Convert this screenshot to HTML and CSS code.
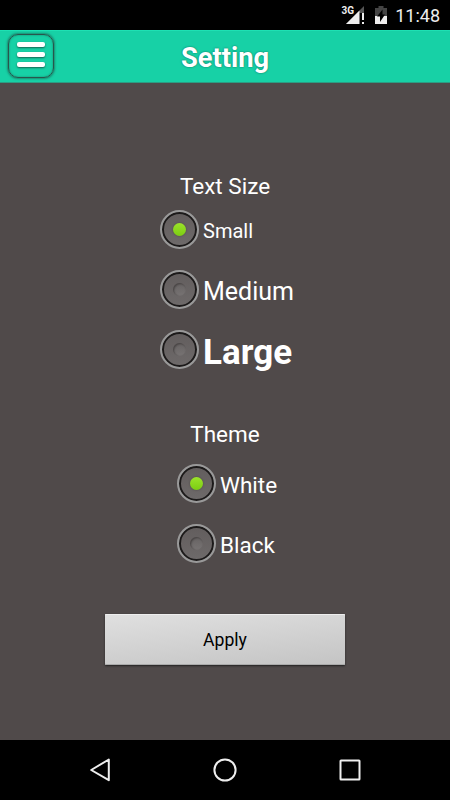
FILE: index.html
```
<!DOCTYPE html>
<html lang="en">
<head>
    <meta charset="UTF-8">
    <meta name="viewport" content="width=device-width, initial-scale=1.0">
    <title>Setting</title>
    <link rel="stylesheet" href="styles.css">
</head>
<body>
    <div class="status-bar">
        <svg class="signal" width="25" height="22" viewBox="0 0 25 22">
            <path d="M23 2V9H18V20H5Z" fill="#555"/>
            <path d="M18.500 6.500V20H5Z" fill="#eee"/>
            <path d="M21 9h2v7h-2zM21 18h2v2h-2z" fill="#eee"/>
            <text x="0.500" y="9.500" class="signal-type">3G</text>
        </svg>
        <svg class="battery" width="12" height="18" viewBox="0 0 12 18">
            <path d="M3.500 0h5v2H12v8H0V2h3.500z" fill="#444"/>
            <path d="M0 10h12v8H0z" fill="#eee"/>
            <path d="M7.500 3.500L2 10.500H5V16l5-7.500H7.500z" fill="#000"/>
        </svg>
        <span class="clock">11:48</span>
    </div>
    <header class="header">
        <button class="menu-button" aria-label="Menu">
            <span></span>
            <span></span>
            <span></span>
        </button>
        <h1>Setting</h1>
    </header>
    <main class="settings">
        <h2>Text Size</h2>
        <div class="group group-size">
            <label class="option"><i class="radio checked"></i><span class="small">Small</span></label>
            <label class="option"><i class="radio"></i><span class="medium">Medium</span></label>
            <label class="option"><i class="radio"></i><span class="large">Large</span></label>
        </div>
        <h2 class="theme-title">Theme</h2>
        <div class="group group-theme">
            <label class="option"><i class="radio checked"></i><span>White</span></label>
            <label class="option"><i class="radio"></i><span>Black</span></label>
        </div>
        <button class="apply">Apply</button>
    </main>
    <nav class="nav-bar">
        <svg width="24" height="24" viewBox="0 0 24 24"><path d="M20.800 1.500V22.200L3.200 12Z"/></svg>
        <svg width="24" height="24" viewBox="0 0 24 24"><circle cx="12" cy="12" r="10.600"/></svg>
        <svg width="24" height="24" viewBox="0 0 24 24"><rect x="2.500" y="2.500" width="19" height="19" rx="0.500"/></svg>
    </nav>
</body>
</html>
```
FILE: styles.css
```
:root {
    --main-bg-color: #504a4a;
    --header-color: #17d1a6;
}
* {
    box-sizing: border-box;
}
body {
    margin: 0;
    height: 100vh;
    display: flex;
    flex-direction: column;
    font-family: Roboto, sans-serif;
    background-color: var(--main-bg-color);
    color: #fff;
    overflow: hidden;
}
/* Android status bar */
.status-bar {
    height: 30px;
    display: flex;
    justify-content: flex-end;
    align-items: center;
    padding-right: 10px;
    background-color: #000;
}
.signal {
    margin: 0 9px 0 0;
}
.signal-type {
    font: bold 10px Roboto, sans-serif;
    fill: #eee;
}
.battery {
    margin: 0 8px 0 0;
}
.clock {
    font-size: 18px;
    line-height: 30px;
    color: #eee;
    padding-top: 1px;
}
/* Header */
.header {
    height: 53px;
    display: grid;
    grid-template-columns: 62px 1fr 62px;
    background-color: var(--header-color);
    border-top: 1px solid #1ee0b3;
    border-bottom: 1px solid #2c9d83;
}
.menu-button {
    width: 46px;
    height: 44px;
    margin: 3px 0 0 8px;
    padding: 0 0 3px;
    display: flex;
    flex-direction: column;
    align-items: center;
    justify-content: center;
    gap: 5px;
    background: none;
    border: 1.5px solid #28564c;
    border-radius: 10px;
    box-shadow: 0 0 2px 1px rgba(30, 70, 62, 0.5), inset 0 0 2px rgba(30, 70, 62, 0.6);
}
.menu-button span {
    width: 28px;
    height: 5px;
    border-radius: 2px;
    background-color: #fff;
    box-shadow: 0 1px 2px #126451;
}
h1 {
    margin: 0;
    font-size: 27.3px;
    line-height: 54px;
    font-weight: bold;
    text-align: center;
    text-shadow: 0 0 2px rgba(0, 60, 50, 0.7);
}
/* Settings */
.settings {
    flex: 1;
    display: flex;
    flex-direction: column;
    align-items: center;
    padding-top: 90px;
}
h2 {
    margin: 0;
    font-size: 22.5px;
    line-height: 26px;
    font-weight: normal;
}
.theme-title {
    margin-top: 42px;
}
.group {
    font-size: 22.5px;
}
.group-size {
    width: 130px;
}
.group-theme {
    width: 96px;
    margin-top: 6px;
}
.option {
    height: 60px;
    display: flex;
    align-items: center;
    gap: 4px;
    white-space: nowrap;
}
.option span {
    padding-top: 3px;
}
.option .small {
    font-size: 20px;
}
.option .medium {
    font-size: 25px;
    padding-top: 5px;
}
.option .large {
    font-size: 35px;
    font-weight: bold;
    padding-top: 7px;
}
.radio {
    flex: none;
    width: 39px;
    height: 39px;
    display: flex;
    align-items: center;
    justify-content: center;
    border: 2px solid #999;
    border-radius: 50%;
    background: linear-gradient(#625d5d, #6e6a6a);
    box-shadow: inset 0 0 0 2px #1c1a1a;
}
.radio::after {
    content: "";
    width: 13px;
    height: 13px;
    border-radius: 50%;
    background: linear-gradient(#676363, #777373);
    box-shadow: inset 1px 1px 2px #454141;
}
.radio.checked::after {
    background: linear-gradient(#9be32a, #7ccd12);
    box-shadow: 0 0 2px #47433f;
}
.apply {
    width: 240px;
    height: 51px;
    margin-top: 41px;
    padding: 0;
    border: 0;
    border-radius: 1px;
    font: 17.6px Roboto, sans-serif;
    color: #000;
    background: linear-gradient(174deg, #e0e0e0, #c4c4c4);
    box-shadow: inset 0 1px #eee, inset 0 -1px #aaa, 0 1px 2px #222;
}
/* Android navigation bar */
.nav-bar {
    height: 60px;
    display: flex;
    justify-content: center;
    align-items: center;
    gap: 101px;
    background-color: #000;
}
.nav-bar svg {
    fill: none;
    stroke: #eee;
    stroke-width: 2;
    stroke-linejoin: round;
}
```
